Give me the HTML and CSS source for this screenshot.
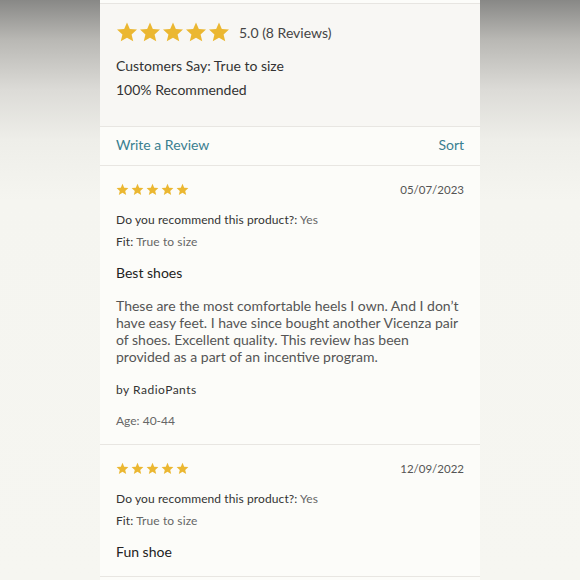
FILE: index.html
```html
<!DOCTYPE html>
<html lang="en">

<head>
  <meta charset="UTF-8">
  <meta name="viewport" content="width=device-width, initial-scale=1.0">
  <title>Reviews</title>
  <link rel="stylesheet" href="styles.css">
</head>

<body>
  <svg class="defs" width="0" height="0">
    <symbol id="star" viewBox="0 0 24 24">
      <path d="M12 1.5l3.1 7.2 7.8.7-5.9 5.2 1.8 7.6L12 18.2l-6.8 4 1.8-7.6-5.9-5.2 7.8-.7z" />
    </symbol>
  </svg>

  <div class="panel">
    <div class="summary">
      <div class="summary_rating">
        <div class="stars stars_big">
          <svg><use href="#star" /></svg>
          <svg><use href="#star" /></svg>
          <svg><use href="#star" /></svg>
          <svg><use href="#star" /></svg>
          <svg><use href="#star" /></svg>
        </div>
        <span class="summary_score">5.0 (8 Reviews)</span>
      </div>
      <p class="summary_line">Customers Say: True to size</p>
      <p class="summary_line">100% Recommended</p>
    </div>

    <div class="toolbar">
      <a href="#">Write a Review</a>
      <a href="#">Sort</a>
    </div>

    <div class="review">
      <div class="review_head">
        <div class="stars">
          <svg><use href="#star" /></svg>
          <svg><use href="#star" /></svg>
          <svg><use href="#star" /></svg>
          <svg><use href="#star" /></svg>
          <svg><use href="#star" /></svg>
        </div>
        <span class="review_date">05/07/2023</span>
      </div>
      <p class="review_meta"><span class="label">Do you recommend this product?:</span> Yes</p>
      <p class="review_meta"><span class="label">Fit:</span> True to size</p>
      <h3 class="review_title">Best shoes</h3>
      <p class="review_body">These are the most comfortable heels I own. And I don’t have easy feet. I have since bought another Vicenza pair of shoes. Excellent quality. This review has been provided as a part of an incentive program.</p>
      <p class="review_author">by RadioPants</p>
      <p class="review_age">Age: 40-44</p>
    </div>

    <div class="review">
      <div class="review_head">
        <div class="stars">
          <svg><use href="#star" /></svg>
          <svg><use href="#star" /></svg>
          <svg><use href="#star" /></svg>
          <svg><use href="#star" /></svg>
          <svg><use href="#star" /></svg>
        </div>
        <span class="review_date">12/09/2022</span>
      </div>
      <p class="review_meta"><span class="label">Do you recommend this product?:</span> Yes</p>
      <p class="review_meta"><span class="label">Fit:</span> True to size</p>
      <h3 class="review_title">Fun shoe</h3>
    </div>
  </div>
</body>

</html>
```

FILE: styles.css
```css
/* base */
body {
  margin: 0;
  height: 580px;
  overflow: hidden;
  font-family: Lato, "Open Sans", sans-serif;
  background: linear-gradient(to bottom, #888886 0, #b9b8b4 40px, #dcdbd7 90px, #eeeee9 140px, #f5f5f0 200px, #f6f6f1 100%);
  display: flex;
  justify-content: center;
}

.defs {
  position: absolute;
}

p,
h3 {
  margin: 0;
}

.panel {
  width: 380px;
  background-color: #fcfcf9;
  padding-top: 3px;
}

/* stars */
.stars {
  display: flex;
  gap: 2px;
  fill: #ebb731;
}

.stars svg {
  width: 13px;
  height: 13px;
}

.stars_big {
  gap: 1px;
}

.stars_big svg {
  width: 22px;
  height: 22px;
}

/* summary */
.summary {
  background-color: #f8f7f4;
  border-top: 1px solid #e7e5e1;
  border-bottom: 1px solid #e8e6e2;
  padding: 16px 16px 24px;
}

.summary_rating {
  display: flex;
  align-items: center;
  gap: 9px;
  height: 24px;
}

.summary_score {
  font-size: 14px;
  color: #444;
}

.summary_rating + .summary_line {
  margin-top: 10px;
}

.summary_line {
  font-size: 14px;
  line-height: 24px;
  color: #333;
}

/* toolbar */
.toolbar {
  display: flex;
  justify-content: space-between;
  align-items: center;
  box-sizing: border-box;
  height: 39px;
  padding: 0 16px 3px;
  border-bottom: 1px solid #e8e6e2;
}

.toolbar a {
  font-size: 14px;
  color: #3a7f90;
  text-decoration: none;
}

/* review */
.review {
  padding: 13px 16px 13px;
  border-bottom: 1px solid #e8e6e2;
}

.review_head {
  display: flex;
  justify-content: space-between;
  align-items: center;
  height: 20px;
}

.review_date {
  font-size: 11.5px;
  color: #555;
}

.review_head + .review_meta {
  margin-top: 10px;
}

.review_meta {
  font-size: 12px;
  line-height: 22px;
  color: #666;
  letter-spacing: 0.1px;
}

.review_meta .label {
  color: #333;
}

.review_title {
  margin-top: 9px;
  font-size: 14px;
  font-weight: normal;
  line-height: 22px;
  color: #222;
}

.review_body {
  margin-top: 13px;
  font-size: 14px;
  line-height: 17px;
  color: #555;
}

.review_author {
  margin-top: 15px;
  font-size: 12px;
  line-height: 20px;
  color: #333;
  letter-spacing: 0.5px;
}

.review_age {
  margin-top: 11px;
  font-size: 12px;
  line-height: 20px;
  color: #666;
}
```
